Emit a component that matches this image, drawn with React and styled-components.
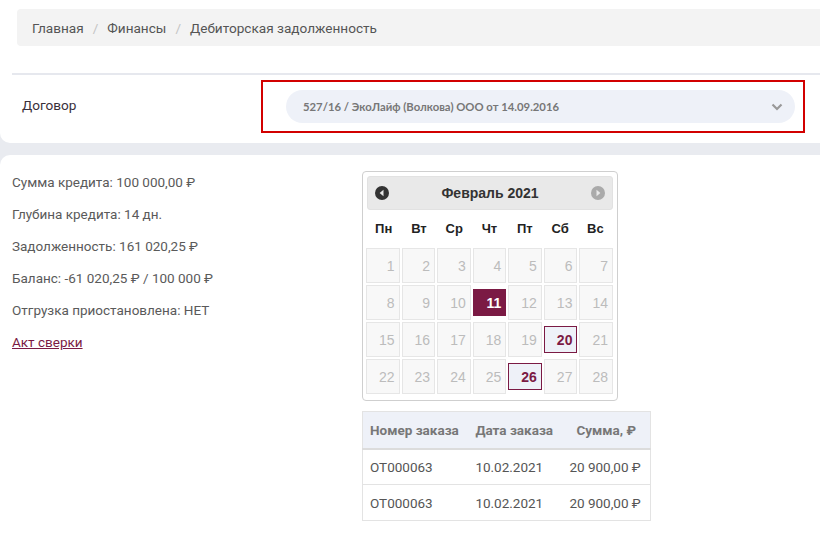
import React from 'react';
import styled, { createGlobalStyle } from 'styled-components';

const GlobalStyle = createGlobalStyle`
  html, body {
    margin: 0;
    padding: 0;
    background: #e9ebf0;
    font-family: Roboto, "Noto Sans", sans-serif;
  }
  * { box-sizing: border-box; }
`;

const MONTH = 'Февраль 2021';
const WEEKDAYS = ['Пн', 'Вт', 'Ср', 'Чт', 'Пт', 'Сб', 'Вс'];
const TODAY = 11;
const MARKED = [20, 26];

const INFO = [
  'Сумма кредита: 100 000,00 ₽',
  'Глубина кредита: 14 дн.',
  'Задолженность: 161 020,25 ₽',
  'Баланс: -61 020,25 ₽ / 100 000 ₽',
  'Отгрузка приостановлена: НЕТ',
];

const ORDERS = [
  { id: 'ОТ000063', date: '10.02.2021', sum: '20 900,00 ₽' },
  { id: 'ОТ000063', date: '10.02.2021', sum: '20 900,00 ₽' },
];

function ArrowIcon({ dir, color }) {
  return (
    <svg width="14" height="14" viewBox="0 0 14 14">
      <circle cx="7" cy="7" r="7" fill={color} />
      {dir === 'prev'
        ? <polygon points="8.5,3.8 8.5,10.2 4.6,7" fill="#e8e8e8" />
        : <polygon points="5.5,3.8 5.5,10.2 9.4,7" fill="#e8e8e8" />}
    </svg>
  );
}

function Calendar() {
  const days = Array.from({ length: 28 }, (_, i) => i + 1);
  return (
    <CalendarBox>
      <CalendarHeader>
        <NavButton><ArrowIcon dir="prev" color="#333" /></NavButton>
        <MonthTitle>{MONTH}</MonthTitle>
        <NavButton><ArrowIcon dir="next" color="#aaa" /></NavButton>
      </CalendarHeader>
      <WeekRow>
        {WEEKDAYS.map((d) => <WeekDay key={d}>{d}</WeekDay>)}
      </WeekRow>
      <DaysGrid>
        {days.map((d) => (
          <DayCell
            key={d}
            $active={d === TODAY}
            $marked={MARKED.includes(d)}
          >
            {d}
          </DayCell>
        ))}
      </DaysGrid>
    </CalendarBox>
  );
}

export default function App() {
  return (
    <>
      <GlobalStyle />
      <Page>
        <TopCard>
          <Breadcrumbs>
            <Crumb>Главная</Crumb>
            <Sep>/</Sep>
            <Crumb>Финансы</Crumb>
            <Sep>/</Sep>
            <Crumb>Дебиторская задолженность</Crumb>
          </Breadcrumbs>
          <Divider />
          <FilterRow>
            <FilterLabel>Договор</FilterLabel>
            <Highlight>
              <Select>
                <span>527/16 / ЭкоЛайф (Волкова) ООО от 14.09.2016</span>
                <svg width="12" height="8" viewBox="0 0 12 8">
                  <polyline points="1.5,1.5 6,6 10.5,1.5" fill="none" stroke="#999" strokeWidth="2.2" />
                </svg>
              </Select>
            </Highlight>
          </FilterRow>
        </TopCard>

        <MainCard>
          <InfoColumn>
            {INFO.map((line) => <InfoLine key={line}>{line}</InfoLine>)}
            <InfoLink href="#">Акт сверки</InfoLink>
          </InfoColumn>
          <RightColumn>
            <Calendar />
            <OrdersTable>
              <thead>
                <tr>
                  <Th>Номер заказа</Th>
                  <Th>Дата заказа</Th>
                  <Th $center>Сумма, ₽</Th>
                </tr>
              </thead>
              <tbody>
                {ORDERS.map((o, i) => (
                  <tr key={i}>
                    <Td>{o.id}</Td>
                    <Td>{o.date}</Td>
                    <Td>{o.sum}</Td>
                  </tr>
                ))}
              </tbody>
            </OrdersTable>
          </RightColumn>
        </MainCard>
      </Page>
    </>
  );
}

const Page = styled.div`
  width: 820px;
  height: 545px;
  overflow: hidden;
  display: flex;
  flex-direction: column;
  gap: 12px;
`;

const TopCard = styled.div`
  background: #fff;
  border-radius: 0 0 0 10px;
  padding: 9px 0 0 12px;
  height: 143px;
`;

const Breadcrumbs = styled.div`
  margin-left: 5px;
  height: 37px;
  background: #f3f3f3;
  border-radius: 4px 0 0 4px;
  display: flex;
  align-items: center;
  padding: 0 15px;
  gap: 9px;
  font-size: 13.6px;
`;

const Crumb = styled.span`
  color: #555;
`;

const Sep = styled.span`
  color: #c4c4c4;
`;

const Divider = styled.div`
  height: 2px;
  background: #e6e8ee;
  margin-top: 27px;
`;

const FilterRow = styled.div`
  display: flex;
  align-items: center;
  padding-top: 5px;
`;

const FilterLabel = styled.div`
  width: 249px;
  padding: 0 0 3px 10px;
  font-size: 13.6px;
  color: #3a2f3a;
`;

const Highlight = styled.div`
  width: 544px;
  height: 53px;
  border: 2px solid #d20000;
  padding: 8px 8px 0 23px;
`;

const Select = styled.div`
  height: 33px;
  border-radius: 17px;
  background: #eef1f8;
  display: flex;
  align-items: center;
  justify-content: space-between;
  padding: 0 12px 0 17px;
  font-family: Lato, "Noto Sans", sans-serif;
  font-weight: 700;
  font-size: 11.3px;
  color: #777;
`;

const MainCard = styled.div`
  flex: 1;
  background: #fff;
  border-radius: 10px 0 0 0;
  display: flex;
  padding: 16px 0 0 12px;
`;

const InfoColumn = styled.div`
  width: 350px;
  display: flex;
  flex-direction: column;
  align-items: flex-start;
  padding-top: 3px;
`;

const InfoLine = styled.div`
  height: 32px;
  font-size: 13.5px;
  color: #5a5a5a;
`;

const InfoLink = styled.a`
  font-size: 13.5px;
  color: #7b1a44;
  text-decoration: underline;
`;

const RightColumn = styled.div`
  display: flex;
  flex-direction: column;
  align-items: flex-start;
  gap: 10px;
`;

const CalendarBox = styled.div`
  width: 256px;
  border: 1px solid #cfcfcf;
  border-radius: 4px;
  padding: 4px 4px 6px 3px;
  font-family: "Liberation Sans", Arial, sans-serif;
`;

const CalendarHeader = styled.div`
  height: 34px;
  margin-left: 1px;
  background: #e9e9e9;
  border: 1px solid #e2e2e2;
  border-radius: 3px;
  display: flex;
  align-items: center;
  justify-content: space-between;
  padding: 0 7px 0 7px;
`;

const NavButton = styled.span`
  display: flex;
`;

const MonthTitle = styled.div`
  font-size: 14px;
  font-weight: 700;
  color: #333;
`;

const WeekRow = styled.div`
  display: grid;
  grid-template-columns: repeat(7, 1fr);
  height: 38px;
  align-items: center;
  padding-bottom: 2px;
`;

const WeekDay = styled.div`
  text-align: center;
  font-size: 13px;
  font-weight: 700;
  color: #222;
`;

const DaysGrid = styled.div`
  display: grid;
  grid-template-columns: repeat(7, 1fr);
  grid-auto-rows: 35px;
  gap: 2px 2px;
`;

const DayCell = styled.div`
  display: flex;
  align-items: center;
  justify-content: flex-end;
  padding-right: 4px;
  font-size: 14px;
  margin: ${(p) => (p.$active || p.$marked ? '4px 0' : '0')};
  border: 1px solid ${(p) => (p.$active || p.$marked ? '#7b1a44' : '#e6e6e6')};
  background: ${(p) => (p.$active ? '#7b1a44' : p.$marked ? '#eef1f8' : '#f8f8f8')};
  color: ${(p) => (p.$active ? '#fff' : p.$marked ? '#7b1a44' : '#bcbcbc')};
  font-weight: ${(p) => (p.$active || p.$marked ? 700 : 400)};
`;

const OrdersTable = styled.table`
  width: 289px;
  border-collapse: collapse;
  border: 1px solid #e3e3e3;
  font-size: 13.5px;
  color: #555;
`;

const Th = styled.th`
  height: 37px;
  background: #eef1f8;
  border-bottom: 2px solid #dcdcdc;
  color: #777;
  font-weight: 700;
  text-align: ${(p) => (p.$center ? 'center' : 'left')};
  padding: 0 7px;
  white-space: nowrap;
`;

const Td = styled.td`
  height: 36px;
  border-top: 1px solid #e3e3e3;
  padding: 0 7px;
  white-space: nowrap;
`;
